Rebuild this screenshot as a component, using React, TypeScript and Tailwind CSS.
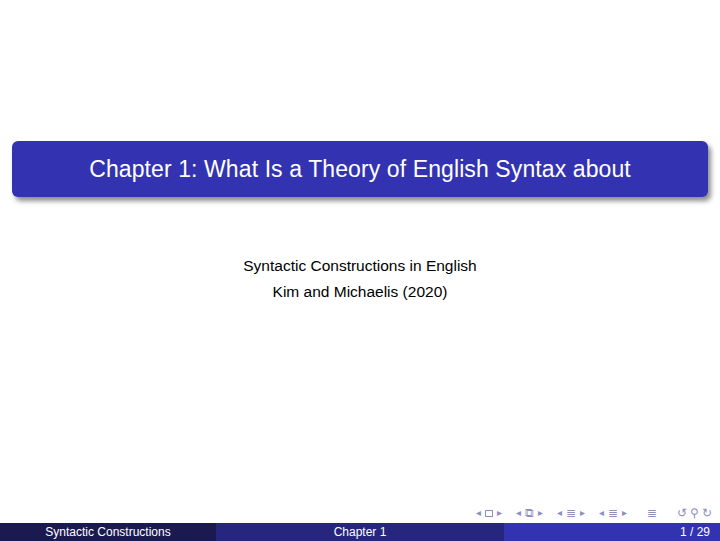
export default function App() {
    const nav = 'text-[#8e8ec0] text-[10px] leading-none';
    return (
        <div className="w-[720px] h-[541px] bg-white flex flex-col font-[Liberation_Sans,Arial,sans-serif] overflow-hidden">
            <div className="h-[141px]" />
            <div className="mx-[12px] h-[56px] rounded-[6px] bg-[#3333b2] shadow-[3px_4px_5px_rgba(0,0,0,0.45)] flex items-center justify-center">
                <h1 className="text-white text-[23px] tracking-[0.1px]">
                    Chapter 1: What Is a Theory of English Syntax about
                </h1>
            </div>
            <div className="mt-[56px] flex flex-col items-center text-[15.5px] text-black leading-[26px]">
                <p>Syntactic Constructions in English</p>
                <p>Kim and Michaelis (2020)</p>
            </div>
            <div className="flex-1" />
            {/* navigation symbols */}
            <div className="h-[16px] mb-[2px] flex items-center justify-end pr-[8px] gap-[14px]">
                <div className={`flex items-center gap-[4px] ${nav}`}>
                    <span>◂</span>
                    <span className="w-[8px] h-[7px] border border-[#8e8ec0]" />
                    <span>▸</span>
                </div>
                <div className={`flex items-center gap-[4px] ${nav}`}>
                    <span>◂</span>
                    <span className="text-[12px]">⧉</span>
                    <span>▸</span>
                </div>
                <div className={`flex items-center gap-[4px] ${nav}`}>
                    <span>◂</span>
                    <span className="text-[12px]">≣</span>
                    <span>▸</span>
                </div>
                <div className={`flex items-center gap-[4px] ${nav}`}>
                    <span>◂</span>
                    <span className="text-[12px]">≣</span>
                    <span>▸</span>
                </div>
                <span className={`${nav} text-[12px] mx-[6px]`}>≣</span>
                <div className={`flex items-center gap-[3px] ${nav} text-[12px]`}>
                    <span>↺</span>
                    <span>⚲</span>
                    <span>↻</span>
                </div>
            </div>
            <div className="h-[18px] flex text-[12px] text-white leading-none">
                <div className="w-[216px] bg-[#1a1a50] flex items-center justify-center">
                    Syntactic Constructions
                </div>
                <div className="w-[288px] bg-[#26267e] flex items-center justify-center">
                    Chapter 1
                </div>
                <div className="w-[216px] bg-[#3333b2] flex items-center justify-end pr-[10px]">
                    1 / 29
                </div>
            </div>
        </div>
    );
}
